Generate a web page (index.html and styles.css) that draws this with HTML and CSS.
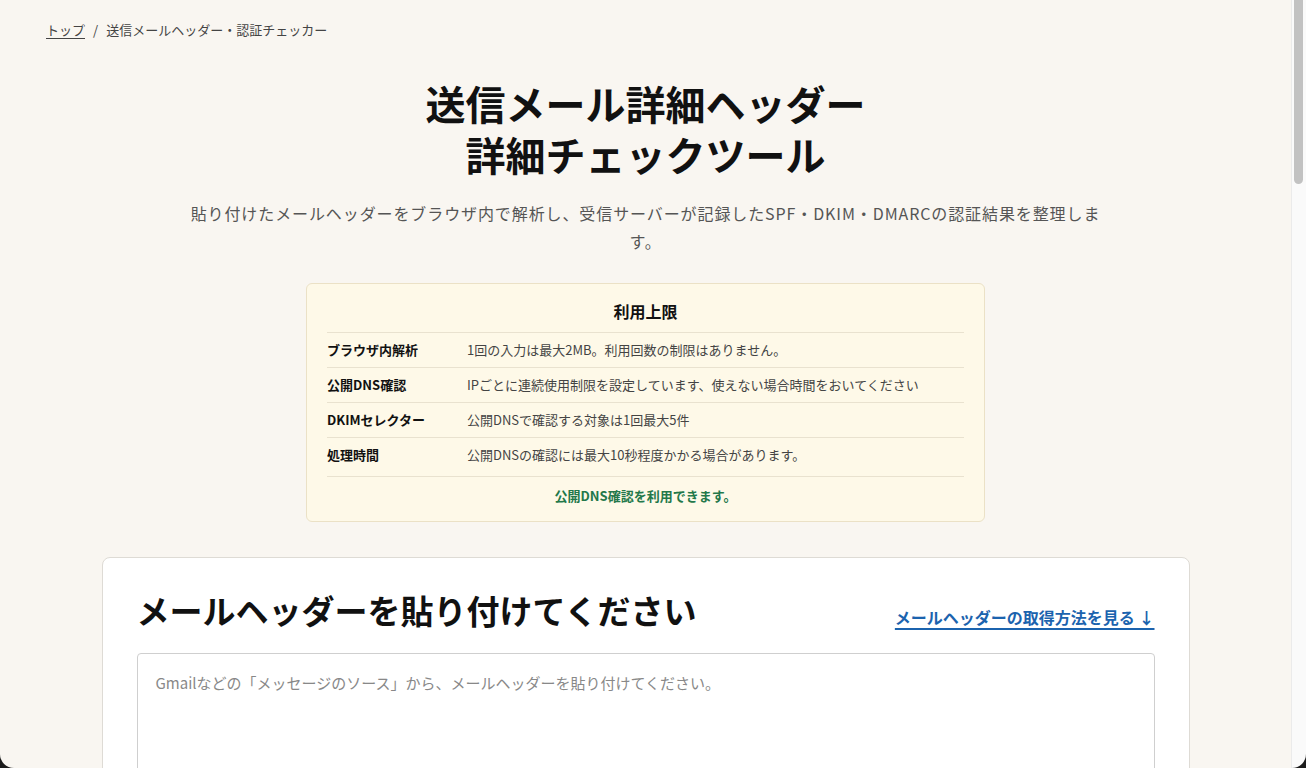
FILE: index.html
```html
<!DOCTYPE html>
<html lang="ja">
<head>
    <meta charset="UTF-8">
    <meta name="viewport" content="width=device-width, initial-scale=1.0">
    <title>送信メール詳細ヘッダー 詳細チェックツール</title>
    <link rel="stylesheet" href="styles.css">
</head>
<body>
    <nav class="breadcrumb">
        <a href="#">トップ</a>
        <span class="sep">/</span>
        <span>送信メールヘッダー・認証チェッカー</span>
    </nav>

    <main class="page">
        <header class="intro">
            <h1>送信メール詳細ヘッダー<br>詳細チェックツール</h1>
            <p class="lead">貼り付けたメールヘッダーをブラウザ内で解析し、受信サーバーが記録したSPF・DKIM・DMARCの認証結果を整理します。</p>
        </header>

        <section class="limits">
            <h2>利用上限</h2>
            <dl class="limits-list">
                <div class="row">
                    <dt>ブラウザ内解析</dt>
                    <dd>1回の入力は最大2MB。利用回数の制限はありません。</dd>
                </div>
                <div class="row">
                    <dt>公開DNS確認</dt>
                    <dd>IPごとに連続使用制限を設定しています、使えない場合時間をおいてください</dd>
                </div>
                <div class="row">
                    <dt>DKIMセレクター</dt>
                    <dd>公開DNSで確認する対象は1回最大5件</dd>
                </div>
                <div class="row">
                    <dt>処理時間</dt>
                    <dd>公開DNSの確認には最大10秒程度かかる場合があります。</dd>
                </div>
            </dl>
            <p class="status">公開DNS確認を利用できます。</p>
        </section>

        <section class="card">
            <div class="card-head">
                <h2>メールヘッダーを貼り付けてください</h2>
                <a class="guide-link" href="#guide">メールヘッダーの取得方法を見る ↓</a>
            </div>
            <textarea class="header-input" placeholder="Gmailなどの「メッセージのソース」から、メールヘッダーを貼り付けてください。"></textarea>
            <div class="actions">
                <button class="btn primary">ヘッダーを解析する</button>
                <button class="btn">クリア</button>
            </div>
        </section>

        <section class="card result">
            <h2>解析結果</h2>
            <p class="empty">メールヘッダーを貼り付けて「ヘッダーを解析する」を押すと、ここに結果が表示されます。</p>
        </section>

        <section class="card guide" id="guide">
            <h2>メールヘッダーの取得方法</h2>
            <div class="guide-item">
                <h3>Gmail</h3>
                <p>メールを開き、右上の「︙」メニューから「メッセージのソースを表示」を選びます。表示された内容をすべてコピーしてください。</p>
            </div>
            <div class="guide-item">
                <h3>Outlook</h3>
                <p>メールを開き、「…」メニューから「表示」→「メッセージのソースを表示」を選びます。</p>
            </div>
            <div class="guide-item">
                <h3>Apple メール</h3>
                <p>メールを選択し、メニューの「表示」→「メッセージ」→「すべてのヘッダ」を選びます。</p>
            </div>
            <div class="guide-item">
                <h3>Yahoo!メール</h3>
                <p>メールを開き、「その他」から「ヘッダー情報を表示」を選びます。</p>
            </div>
        </section>

        <section class="card faq">
            <h2>よくある質問</h2>
            <div class="guide-item">
                <h3>貼り付けた内容はサーバーに送信されますか？</h3>
                <p>ヘッダーの解析はブラウザ内で行います。公開DNS確認ではドメイン名とセレクターのみを使用します。</p>
            </div>
            <div class="guide-item">
                <h3>SPF・DKIM・DMARCとは何ですか？</h3>
                <p>送信元のなりすましを防ぐための送信ドメイン認証の仕組みです。</p>
            </div>
        </section>
    </main>

    <footer class="footer">
        <p>© 送信メールヘッダー・認証チェッカー</p>
    </footer>

    <!-- scrollbar + window frame drawn over the page -->
    <div class="scrollbar"><span class="thumb"></span></div>
    <div class="window-frame"></div>
</body>
</html>
```

FILE: styles.css
```css
*{
    margin: 0;
    padding: 0;
    box-sizing: border-box;
}

body{
    background-color: #f9f6f1;
    color: #111;
    font-family: "Noto Sans CJK JP", "Noto Sans", sans-serif;
    padding-right: 15px;
}

.scrollbar{
    position: fixed;
    top: 0;
    right: 0;
    width: 15px;
    height: 100vh;
    background-color: #fafafa;
    border-left: 1px solid #ebebeb;
}

.scrollbar .thumb{
    display: block;
    margin: 0 3px 0 2px;
    height: 184px;
    background-color: #c2c2c2;
    border-radius: 0 0 5px 5px;
}

.window-frame{
    position: fixed;
    inset: 0;
    border-radius: 0 0 14px 14px;
    box-shadow: 0 0 0 30px #1c1c1c;
    pointer-events: none;
}

.breadcrumb{
    padding: 21px 46px 0;
    font-size: 13px;
    line-height: 18px;
    color: #444;
    display: flex;
    gap: 8px;
}

.breadcrumb a{
    color: #444;
    text-decoration: underline;
    text-underline-offset: 3px;
}

.page{
    max-width: 1088px;
    margin: 0 auto;
    padding-bottom: 80px;
}

.intro{
    text-align: center;
    padding-top: 39px;
}

.intro h1{
    font-size: 40px;
    line-height: 51px;
    font-weight: 700;
}

.lead{
    max-width: 912px;
    margin: 19px auto 0;
    font-size: 16px;
    line-height: 28px;
    letter-spacing: 0.9px;
    color: #555;
}

.limits{
    width: 679px;
    margin: 28px auto 0;
    background-color: #fef9e8;
    border: 1px solid #ebe1c6;
    border-radius: 6px;
    padding: 15px 20px 16px;
}

.limits h2{
    text-align: center;
    font-size: 16px;
    line-height: 24px;
    font-weight: 700;
    margin-bottom: 9px;
}

.limits-list .row{
    display: flex;
    border-top: 1px solid #e9e2cf;
    padding: 8px 0;
    font-size: 13px;
    line-height: 18px;
}

.limits-list .row:last-child{
    padding-bottom: 12px;
}

.limits-list dt{
    width: 140px;
    font-weight: 700;
    color: #111;
}

.limits-list dd{
    color: #444;
}

.status{
    border-top: 1px solid #e9e2cf;
    padding-top: 10px;
    text-align: center;
    font-size: 13px;
    line-height: 18px;
    font-weight: 700;
    color: #23784a;
}

.card{
    background-color: #fff;
    border: 1px solid #dedbd5;
    border-radius: 8px;
    padding: 29px 34px 34px;
    margin-top: 35px;
}

.card-head{
    display: flex;
    justify-content: space-between;
    align-items: baseline;
}

.card h2{
    font-size: 33px;
    line-height: 47px;
    font-weight: 700;
}

.guide-link{
    font-size: 16px;
    font-weight: 700;
    color: #1b63ae;
    text-decoration: underline;
    text-decoration-thickness: 2px;
    text-underline-offset: 4px;
}

.header-input{
    display: block;
    width: 100%;
    height: 300px;
    margin-top: 19px;
    border: 1px solid #cfcfcf;
    border-radius: 4px;
    padding: 18px;
    font-family: "Noto Sans CJK JP", "Noto Sans", sans-serif;
    font-size: 15px;
    line-height: 22px;
    resize: vertical;
}

.header-input::placeholder{
    color: #888;
}

.actions{
    display: flex;
    gap: 12px;
    margin-top: 20px;
}

.btn{
    font-family: inherit;
    font-size: 16px;
    font-weight: 700;
    padding: 12px 28px;
    border-radius: 6px;
    border: 1px solid #cfcfcf;
    background-color: #fff;
    color: #333;
}

.btn.primary{
    background-color: #1b63ae;
    border-color: #1b63ae;
    color: #fff;
}

.result, .guide, .faq{
    min-height: 560px;
}

.card .empty{
    margin-top: 16px;
    color: #666;
    font-size: 15px;
}

.guide-item{
    margin-top: 28px;
}

.guide-item h3{
    font-size: 20px;
    margin-bottom: 8px;
}

.guide-item p{
    font-size: 15px;
    line-height: 26px;
    color: #444;
}

.footer{
    text-align: center;
    font-size: 13px;
    color: #777;
    padding: 40px 0 60px;
}
```
